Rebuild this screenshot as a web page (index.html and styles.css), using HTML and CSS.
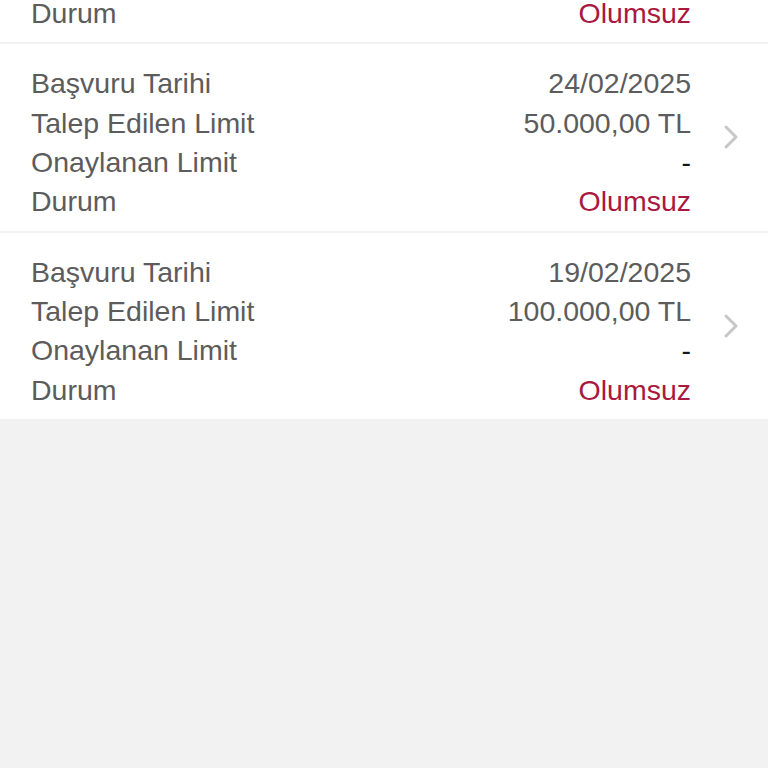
FILE: index.html
```html
<!DOCTYPE html>
<html lang="tr">
<head>
<meta charset="utf-8">
<title>Başvurular</title>
<link rel="stylesheet" href="styles.css">
</head>
<body>
<div class="list">
  <div class="item item-partial">
    <div class="rows">
      <div class="row"><span class="label">Durum</span><span class="value status">Olumsuz</span></div>
    </div>
    <div class="chev"></div>
  </div>
  <div class="item">
    <div class="rows">
      <div class="row"><span class="label">Başvuru Tarihi</span><span class="value">24/02/2025</span></div>
      <div class="row"><span class="label">Talep Edilen Limit</span><span class="value">50.000,00 TL</span></div>
      <div class="row"><span class="label">Onaylanan Limit</span><span class="value dash">-</span></div>
      <div class="row"><span class="label">Durum</span><span class="value status">Olumsuz</span></div>
    </div>
    <div class="chev"><svg width="16" height="26" viewBox="0 0 16 26"><path d="M3 3 L13 13 L3 23" fill="none" stroke="#c7c7c7" stroke-width="3" stroke-linecap="round" stroke-linejoin="round"/></svg></div>
  </div>
  <div class="item">
    <div class="rows">
      <div class="row"><span class="label">Başvuru Tarihi</span><span class="value">19/02/2025</span></div>
      <div class="row"><span class="label">Talep Edilen Limit</span><span class="value">100.000,00 TL</span></div>
      <div class="row"><span class="label">Onaylanan Limit</span><span class="value dash">-</span></div>
      <div class="row"><span class="label">Durum</span><span class="value status">Olumsuz</span></div>
    </div>
    <div class="chev"><svg width="16" height="26" viewBox="0 0 16 26"><path d="M3 3 L13 13 L3 23" fill="none" stroke="#c7c7c7" stroke-width="3" stroke-linecap="round" stroke-linejoin="round"/></svg></div>
  </div>
</div>
</body>
</html>
```
FILE: styles.css
```css
html, body {
  margin: 0;
  padding: 0;
  height: 100%;
  overflow: hidden;
  background: #f2f2f2;
  font-family: "Liberation Sans", Arial, sans-serif;
}
.list {
  background: #ffffff;
}
.item {
  display: flex;
  align-items: center;
  background: #ffffff;
  border-bottom: 2px solid #f1f1f1;
}
.rows {
  flex: 1;
  padding: 20px 0 9px 31px;
}
.item-partial .rows {
  padding-top: 0;
  margin-top: -6px;
}
.row {
  display: flex;
  justify-content: space-between;
  font-size: 28.5px;
  line-height: 39.33px;
  color: #5c5c5c;
}
.value.dash {
  color: #151515;
}
.value.status {
  color: #a9183f;
}
.chev {
  width: 77px;
  display: flex;
  justify-content: center;
  padding-left: 2px;
  box-sizing: border-box;
}
.chev svg {
  display: block;
}
```
